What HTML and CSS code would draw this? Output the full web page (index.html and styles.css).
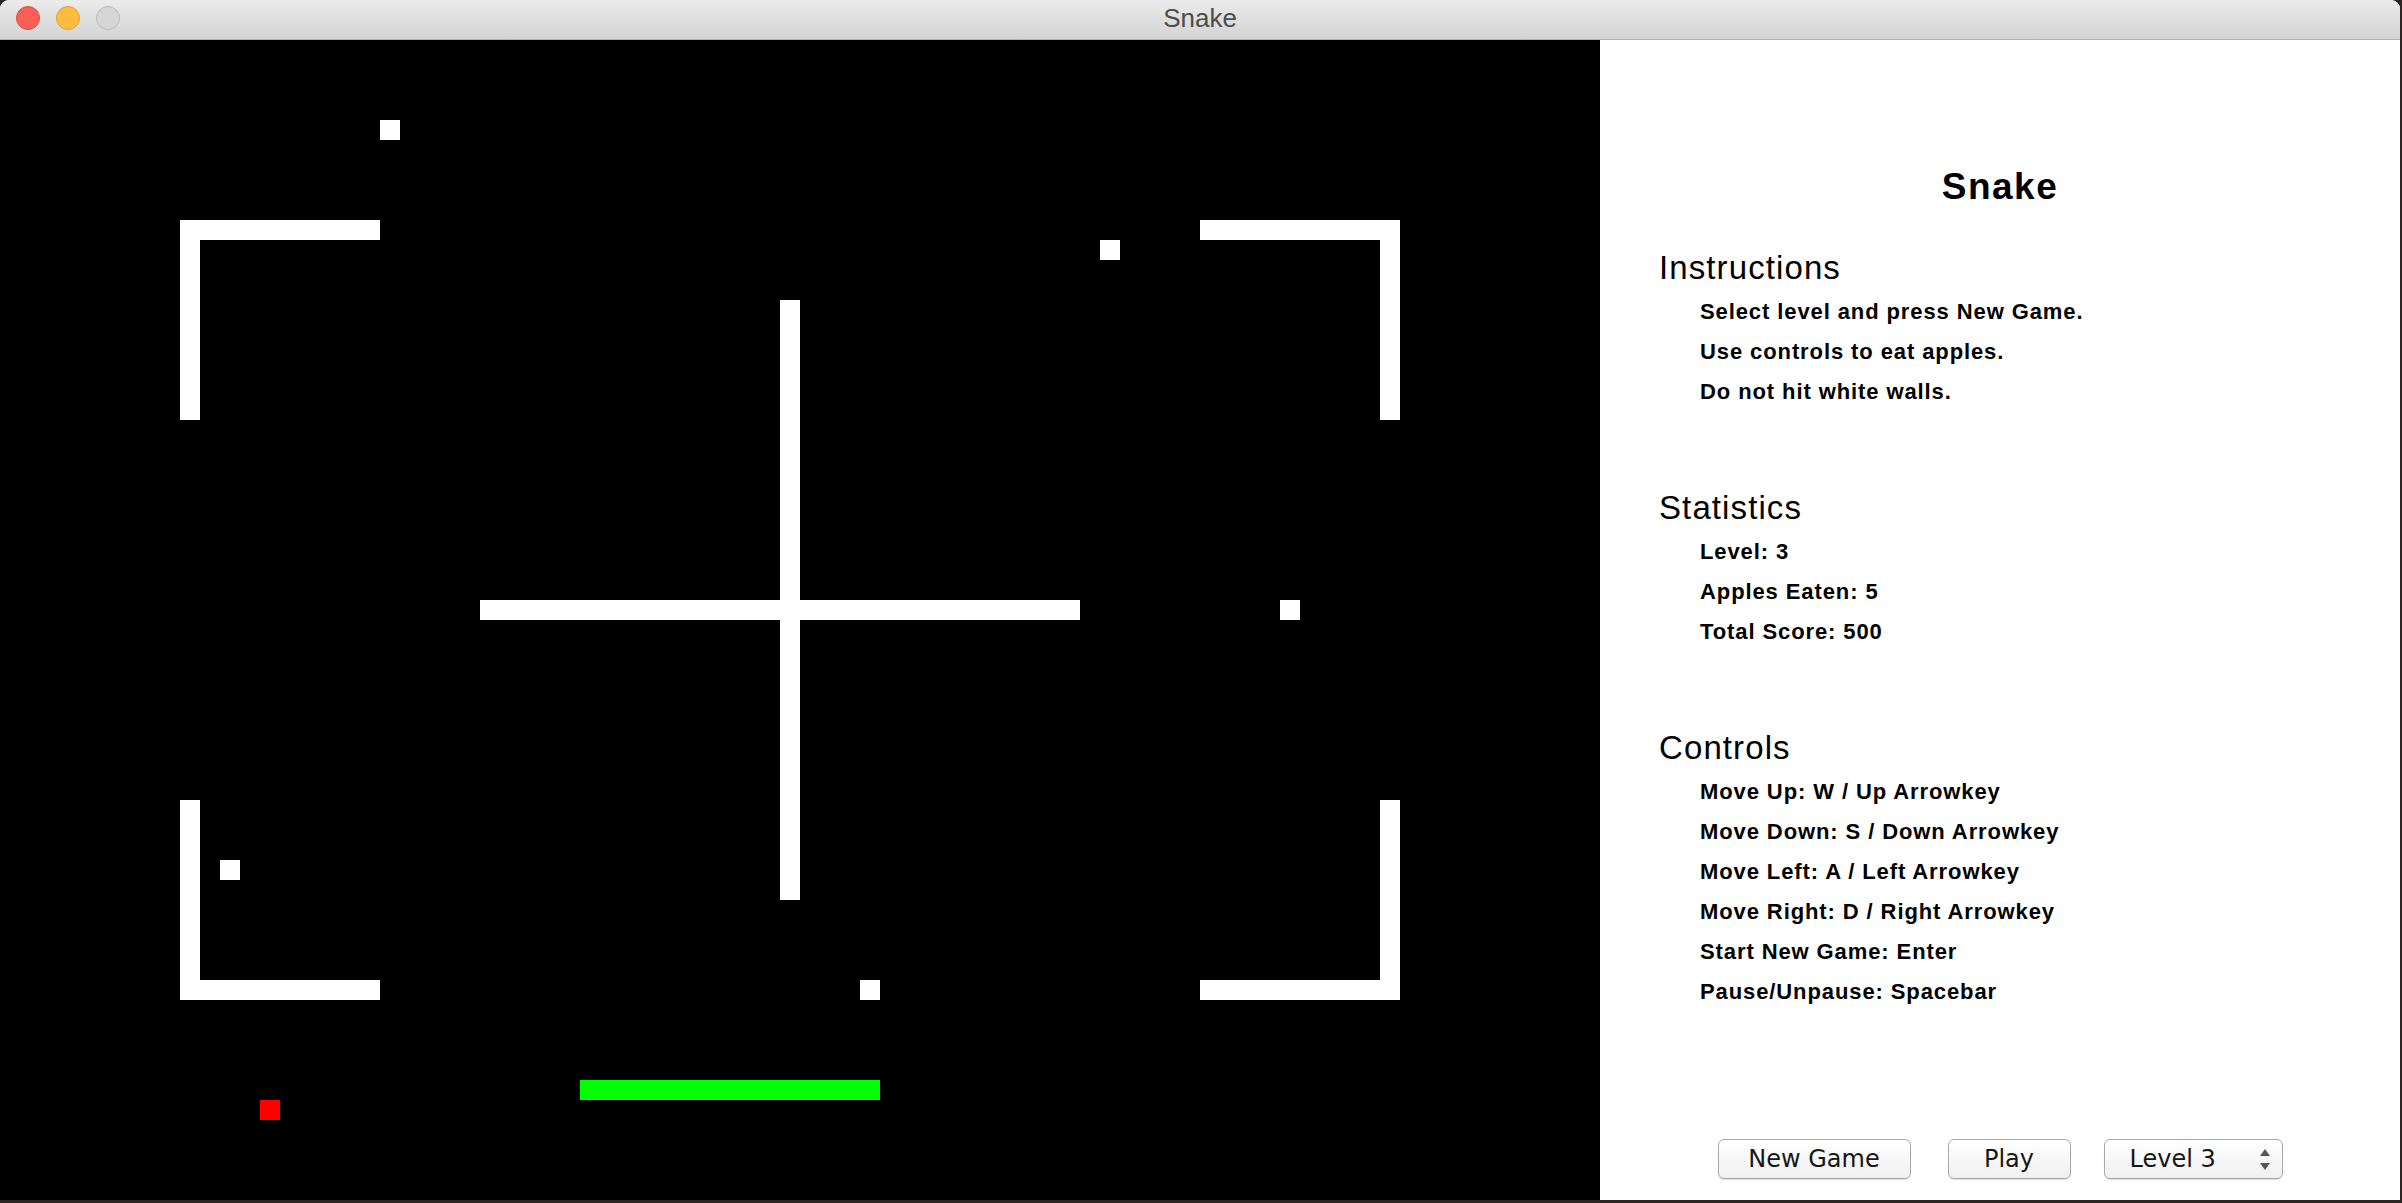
FILE: index.html
```html
<!DOCTYPE html>
<html lang="en">
<head>
<meta charset="utf-8">
<title>Snake</title>
<link rel="stylesheet" href="styles.css">
</head>
<body>
<div class="window">
  <div class="titlebar">
    <div class="lights">
      <span class="light red"></span>
      <span class="light yellow"></span>
      <span class="light gray"></span>
    </div>
    <div class="title">Snake</div>
    <div></div>
  </div>
  <div class="content">
    <div class="board">
      <svg width="1600" height="1160" viewBox="0 0 1600 1160" xmlns="http://www.w3.org/2000/svg">
        <rect width="1600" height="1160" fill="#000"/>
        <g fill="#fff">
          <rect x="380" y="80" width="20" height="20"/>
          <rect x="1100" y="200" width="20" height="20"/>
          <rect x="1280" y="560" width="20" height="20"/>
          <rect x="220" y="820" width="20" height="20"/>
          <rect x="860" y="940" width="20" height="20"/>
          <rect x="180" y="180" width="200" height="20"/>
          <rect x="180" y="180" width="20" height="200"/>
          <rect x="180" y="760" width="20" height="200"/>
          <rect x="180" y="940" width="200" height="20"/>
          <rect x="1200" y="180" width="200" height="20"/>
          <rect x="1380" y="180" width="20" height="200"/>
          <rect x="1380" y="760" width="20" height="200"/>
          <rect x="1200" y="940" width="200" height="20"/>
          <rect x="780" y="260" width="20" height="600"/>
          <rect x="480" y="560" width="600" height="20"/>
        </g>
        <rect x="580" y="1040" width="300" height="20" fill="#00ff00"/>
        <rect x="260" y="1060" width="20" height="20" fill="#ff0000"/>
      </svg>
    </div>
    <div class="panel">
      <h1 class="panel-title">Snake</h1>
      <section class="section">
        <h2 class="heading">Instructions</h2>
        <p class="line">Select level and press New Game.</p>
        <p class="line">Use controls to eat apples.</p>
        <p class="line">Do not hit white walls.</p>
      </section>
      <section class="section">
        <h2 class="heading">Statistics</h2>
        <p class="line">Level: 3</p>
        <p class="line">Apples Eaten: 5</p>
        <p class="line">Total Score: 500</p>
      </section>
      <section class="section">
        <h2 class="heading">Controls</h2>
        <p class="line">Move Up: W / Up Arrowkey</p>
        <p class="line">Move Down: S / Down Arrowkey</p>
        <p class="line">Move Left: A / Left Arrowkey</p>
        <p class="line">Move Right: D / Right Arrowkey</p>
        <p class="line">Start New Game: Enter</p>
        <p class="line">Pause/Unpause: Spacebar</p>
      </section>
      <div class="actions">
        <button class="btn btn-new" type="button">New Game</button>
        <button class="btn btn-play" type="button">Play</button>
        <div class="btn select">
          <span class="select-label">Level 3</span>
          <svg class="select-arrows" width="10" height="21" viewBox="0 0 10 21" xmlns="http://www.w3.org/2000/svg">
            <polygon points="5,0 10,7 0,7" fill="#555"/>
            <polygon points="0,14 10,14 5,21" fill="#555"/>
          </svg>
        </div>
      </div>
    </div>
  </div>
</div>
</body>
</html>
```

FILE: styles.css
```css
* {
  box-sizing: border-box;
}

html,
body {
  margin: 0;
  padding: 0;
}

body {
  width: 2402px;
  height: 1203px;
  overflow: hidden;
  background: #2c2523;
  font-family: "Liberation Sans", Arial, sans-serif;
}

.window {
  width: 2400px;
  height: 1200px;
  display: flex;
  flex-direction: column;
  border-radius: 9px 9px 0 0;
  overflow: hidden;
  background: #fff;
}

.titlebar {
  height: 40px;
  flex: none;
  display: grid;
  grid-template-columns: 1fr auto 1fr;
  background: linear-gradient(#ebebeb, #d3d3d3);
  border-bottom: 1px solid #b0b0b0;
}

.lights {
  display: flex;
  gap: 16px;
  padding: 6px 0 0 16px;
}

.light {
  width: 24px;
  height: 24px;
  border-radius: 50%;
  border: 1px solid;
}

.red {
  background: #fc5f57;
  border-color: #de4a42;
}

.yellow {
  background: #fdbc3f;
  border-color: #dea033;
}

.gray {
  background: #d6d6d6;
  border-color: #b9b9b9;
}

.title {
  font-family: "Liberation Sans", Arial, sans-serif;
  font-size: 26px;
  line-height: 37px;
  color: #4d4d4d;
}

.content {
  flex: 1;
  display: flex;
  min-height: 0;
}

.board {
  width: 1600px;
  height: 1160px;
  flex: none;
  background: #000;
}

.board svg {
  display: block;
}

.panel {
  flex: 1;
  display: flex;
  flex-direction: column;
  padding-top: 125px;
  background: #fff;
  color: #000;
}

.panel-title {
  margin: 0 0 39px;
  text-align: center;
  font-size: 37px;
  font-weight: bold;
  letter-spacing: 1.5px;
  line-height: 44px;
}

.section {
  padding-left: 59px;
  margin-bottom: 76px;
}

.heading {
  margin: 0 0 4px;
  font-size: 33px;
  font-weight: normal;
  letter-spacing: 1.1px;
  line-height: 40px;
}

.line {
  margin: 0;
  padding-left: 41px;
  font-size: 22px;
  font-weight: bold;
  letter-spacing: 0.9px;
  line-height: 40px;
}

.actions {
  margin-top: auto;
  display: flex;
  justify-content: center;
  align-items: center;
  padding-bottom: 20px;
  height: 62px;
}

.btn {
  height: 40px;
  padding: 0;
  border: 1px solid #a8a8a8;
  border-radius: 6px;
  background: linear-gradient(#ffffff, #f0f0f0);
  box-shadow: 0 1px 1px rgba(0, 0, 0, 0.14);
  font-family: "DejaVu Sans", "Liberation Sans", sans-serif;
  font-size: 24px;
  color: #161616;
}

.btn-new {
  width: 193px;
}

.btn-play {
  width: 123px;
  margin-left: 37px;
}

.select {
  width: 179px;
  margin-left: 33px;
  display: flex;
  align-items: center;
  padding: 0 12px 0 25px;
}

.select-arrows {
  margin-left: auto;
  display: block;
}
```
